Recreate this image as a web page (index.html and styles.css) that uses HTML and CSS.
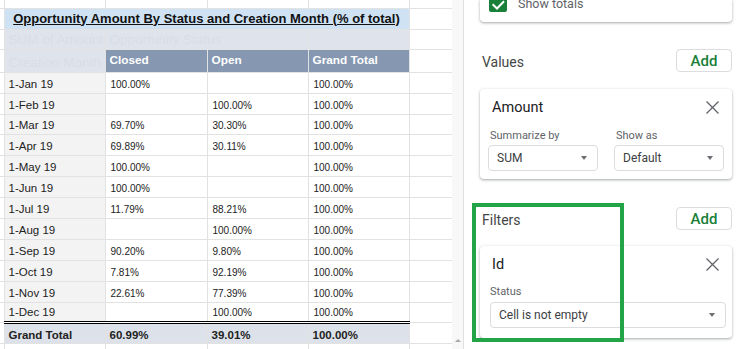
FILE: index.html
```html
<!DOCTYPE html>
<html lang="en">
<head>
    <meta charset="UTF-8">
    <meta name="viewport" content="width=device-width, initial-scale=1.0">
    <title>Pivot table editor</title>
    <link rel="stylesheet" href="styles.css">
</head>
<body>
    <div class="sheet">
        <table class="grid">
            <colgroup>
                <col class="c-edge"><col class="c-label"><col class="c-mid"><col class="c-val"><col class="c-val"><col class="c-rest">
            </colgroup>
            <tr class="r-top"><td class="edge"></td><td></td><td></td><td></td><td></td><td></td></tr>
            <tr class="r-title">
                <td class="edge"></td>
                <td colspan="4" class="title"><u>Opportunity Amount By Status and Creation Month (% of total)</u></td>
                <td></td>
            </tr>
            <tr class="r-sub">
                <td class="edge"></td>
                <td class="ghost">SUM of Amount</td>
                <td colspan="2" class="ghost">Opportunity Status</td>
                <td class="ghost"></td>
                <td></td>
            </tr>
            <tr class="r-head">
                <td class="edge"></td>
                <td class="ghost">Creation Month</td>
                <td class="head">Closed</td>
                <td class="head">Open</td>
                <td class="head">Grand Total</td>
                <td></td>
            </tr>
            <tr><td class="edge"></td><td class="label">1-Jan 19</td><td class="val">100.00%</td><td class="val"></td><td class="val">100.00%</td><td></td></tr>
            <tr><td class="edge"></td><td class="label">1-Feb 19</td><td class="val"></td><td class="val">100.00%</td><td class="val">100.00%</td><td></td></tr>
            <tr class="short"><td class="edge"></td><td class="label">1-Mar 19</td><td class="val">69.70%</td><td class="val">30.30%</td><td class="val">100.00%</td><td></td></tr>
            <tr><td class="edge"></td><td class="label">1-Apr 19</td><td class="val">69.89%</td><td class="val">30.11%</td><td class="val">100.00%</td><td></td></tr>
            <tr><td class="edge"></td><td class="label">1-May 19</td><td class="val">100.00%</td><td class="val"></td><td class="val">100.00%</td><td></td></tr>
            <tr><td class="edge"></td><td class="label">1-Jun 19</td><td class="val">100.00%</td><td class="val"></td><td class="val">100.00%</td><td></td></tr>
            <tr><td class="edge"></td><td class="label">1-Jul 19</td><td class="val">11.79%</td><td class="val">88.21%</td><td class="val">100.00%</td><td></td></tr>
            <tr><td class="edge"></td><td class="label">1-Aug 19</td><td class="val"></td><td class="val">100.00%</td><td class="val">100.00%</td><td></td></tr>
            <tr><td class="edge"></td><td class="label">1-Sep 19</td><td class="val">90.20%</td><td class="val">9.80%</td><td class="val">100.00%</td><td></td></tr>
            <tr><td class="edge"></td><td class="label">1-Oct 19</td><td class="val">7.81%</td><td class="val">92.19%</td><td class="val">100.00%</td><td></td></tr>
            <tr><td class="edge"></td><td class="label">1-Nov 19</td><td class="val">22.61%</td><td class="val">77.39%</td><td class="val">100.00%</td><td></td></tr>
            <tr class="short"><td class="edge"></td><td class="label">1-Dec 19</td><td class="val"></td><td class="val">100.00%</td><td class="val">100.00%</td><td></td></tr>
            <tr class="r-total">
                <td class="edge"></td>
                <td class="total">Grand Total</td>
                <td class="total">60.99%</td>
                <td class="total">39.01%</td>
                <td class="total">100.00%</td>
                <td></td>
            </tr>
            <tr class="r-top"><td class="edge"></td><td></td><td></td><td></td><td></td><td></td></tr>
        </table>
    </div>

    <div class="scroll"><span class="arrow-up"></span></div>

    <aside class="editor">
        <div class="card totals">
            <span class="checkbox">
                <svg width="18" height="18" viewBox="0 0 18 18"><path d="M3.6 10.2l4.4 4.3L15 7.2" fill="none" stroke="#ffffff" stroke-width="2"/></svg>
            </span>
            <span class="totals-label">Show totals</span>
        </div>

        <div class="section-head values-head">
            <span class="section-title">Values</span>
            <button class="add">Add</button>
        </div>

        <div class="card field">
            <div class="field-head">
                <span class="field-name">Amount</span>
                <svg class="close" width="13" height="13" viewBox="0 0 13 13"><path d="M0.5 0.5L12.5 12.5M12.5 0.5L0.5 12.5" stroke="#5f6368" stroke-width="1.3"/></svg>
            </div>
            <div class="pair">
                <div class="opt">
                    <div class="opt-label">Summarize by</div>
                    <div class="select"><span>SUM</span><span class="caret"></span></div>
                </div>
                <div class="opt">
                    <div class="opt-label">Show as</div>
                    <div class="select"><span>Default</span><span class="caret"></span></div>
                </div>
            </div>
        </div>

        <div class="section-head filters-head">
            <span class="section-title">Filters</span>
            <button class="add">Add</button>
        </div>

        <div class="card field filter">
            <div class="field-head">
                <span class="field-name">Id</span>
                <svg class="close" width="13" height="13" viewBox="0 0 13 13"><path d="M0.5 0.5L12.5 12.5M12.5 0.5L0.5 12.5" stroke="#5f6368" stroke-width="1.3"/></svg>
            </div>
            <div class="opt-label status">Status</div>
            <div class="select wide"><span>Cell is not empty</span><span class="caret"></span></div>
        </div>

        <!-- highlight drawn over the filters block -->
        <div class="highlight"></div>
    </aside>
</body>
</html>
```

FILE: styles.css
```css
/* Page */
* {
    box-sizing: border-box;
}

body {
    margin: 0;
    height: 349px;
    overflow: hidden;
    display: flex;
    background: #ffffff;
}

/* Spreadsheet */
.sheet {
    width: 452px;
    flex: none;
    overflow: hidden;
    font-family: "Liberation Sans", Arial, sans-serif;
    color: #222222;
}

.grid {
    width: 452px;
    border-collapse: collapse;
    table-layout: fixed;
}

.c-edge { width: 4px; }
.c-label { width: 101px; }
.c-mid { width: 102px; }
.c-val { width: 101px; }
.c-rest { width: 43px; }

.grid td {
    border: 1px solid #e2e2e2;
    height: 21px;
    padding: 0 4px 3px;
    vertical-align: bottom;
    white-space: nowrap;
    overflow: hidden;
    font-size: 11.5px;
}

.grid td.edge {
    border-left: none;
    padding: 0;
}

.grid tr.r-top td {
    height: 8px;
    padding: 0;
}

.grid tr:first-child td {
    border-top: none;
}

.grid tr.short td {
    height: 20px;
}

.grid .r-title td {
    height: 21px;
}

.grid td.title {
    background: #cfe2f3;
    text-align: center;
    font-weight: bold;
    font-size: 13px;
    color: #111111;
}

.grid .r-sub td {
    height: 20px;
}

.grid td.ghost {
    background: #dfe4ec;
    color: #d7dee8;
    font-size: 13.5px;
    padding-bottom: 2px;
}

.grid .r-head td {
    height: 23px;
}

.grid td.head {
    background: #8597b1;
    color: #ffffff;
    font-weight: bold;
    font-size: 11.8px;
    padding-bottom: 5px;
}

.grid td.label {
    background: #f3f3f3;
}

.grid td.val {
    font-size: 10px;
    padding-left: 5px;
    padding-bottom: 3px;
}

.grid td.total {
    background: #dde2ea;
    font-weight: bold;
    border-top: 3px double #000000;
    padding-bottom: 2px;
}

/* Scroll strip */
.scroll {
    width: 11px;
    flex: none;
    background: #f8f8f8;
    display: flex;
    flex-direction: column;
    justify-content: flex-end;
    align-items: center;
    padding-bottom: 7px;
}

.arrow-up {
    width: 0;
    height: 0;
    border-left: 3px solid transparent;
    border-right: 3px solid transparent;
    border-bottom: 3px solid #a8a8a8;
}

/* Pivot editor */
.editor {
    position: relative;
    flex: 1;
    border-left: 1px solid #e0e0e0;
    padding: 0 14px 0 16px;
    font-family: Roboto, "Noto Sans", sans-serif;
    color: #3c4043;
}

.card {
    background: #ffffff;
    border-radius: 4px;
    box-shadow: 0 1px 2px rgba(60, 64, 67, 0.3), 0 1px 3px 1px rgba(60, 64, 67, 0.12);
}

.totals {
    height: 22px;
    display: flex;
    align-items: flex-end;
    gap: 11px;
    padding: 0 12px 10px 9px;
    border-top-left-radius: 0;
    border-top-right-radius: 0;
}

.checkbox {
    width: 18px;
    height: 18px;
    flex: none;
    border-radius: 2px;
    background: #188038;
    display: block;
}

.checkbox svg {
    display: block;
}

.totals-label {
    font-size: 12.5px;
    color: #5f6368;
    line-height: 15px;
    margin-bottom: 1px;
}

.section-head {
    display: flex;
    justify-content: space-between;
    align-items: center;
    height: 23px;
}

.values-head {
    margin-top: 27px;
}

.filters-head {
    margin-top: 28px;
}

.section-title {
    font-size: 14px;
    color: #444746;
    padding: 2px 0 0 2px;
}

.add {
    width: 56px;
    height: 23px;
    border: 1px solid #dadce0;
    border-radius: 4px;
    background: #ffffff;
    color: #188038;
    font-family: Roboto, sans-serif;
    font-size: 15px;
    font-weight: 500;
    padding: 0;
}

.field {
    margin-top: 17px;
    padding: 10px 8px 8px;
}

.filter {
    margin-top: 16px;
    padding-bottom: 10px;
}

.field-head {
    display: flex;
    justify-content: space-between;
    align-items: center;
    height: 16px;
    padding: 0 5px 0 4px;
}

.field-name {
    font-size: 14.5px;
    color: #202124;
}

.close {
    display: block;
}

.pair {
    display: flex;
    gap: 16px;
    margin-top: 14px;
}

.opt {
    flex: 1;
}

.opt-label {
    font-size: 11px;
    line-height: 13px;
    color: #5f6368;
    padding-left: 2px;
}

.status {
    margin-top: 13px;
}

.select {
    margin-top: 3px;
    height: 26px;
    border: 1px solid #dadce0;
    border-radius: 4px;
    display: flex;
    justify-content: space-between;
    align-items: center;
    padding: 0 10px 0 8px;
    font-size: 12px;
    color: #3c4043;
}

.select.wide {
    margin-top: 4px;
    margin-left: 2px;
    margin-right: -2px;
}

.caret {
    width: 0;
    height: 0;
    border-left: 3.5px solid transparent;
    border-right: 3.5px solid transparent;
    border-top: 4px solid #6b6f74;
}

.highlight {
    position: absolute;
    left: 8px;
    top: 203px;
    width: 152px;
    height: 139px;
    border: 4px solid #22a447;
    pointer-events: none;
}
```
